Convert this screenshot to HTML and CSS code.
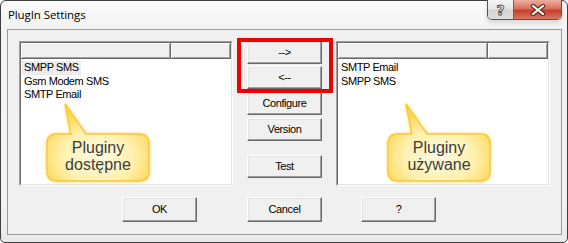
FILE: index.html
```html
<!DOCTYPE html>
<html>
<head>
<meta charset="utf-8">
<link rel="stylesheet" href="styles.css">
</head>
<body>
<div class="window">
  <div class="titlebar">
    <span class="title">PlugIn Settings</span>
    <div class="caption-btns">
      <div class="cap-help">?</div>
      <div class="cap-close">
        <svg width="16" height="12" viewBox="0 0 16 12">
          <path d="M3 2 L13 10 M13 2 L3 10" stroke="#5a2a20" stroke-width="4.2" stroke-linecap="round" fill="none"/>
          <path d="M3 2 L13 10 M13 2 L3 10" stroke="#ffffff" stroke-width="2.2" stroke-linecap="round" fill="none"/>
        </svg>
      </div>
    </div>
  </div>
  <div class="client">
    <div class="main-row">
      <div class="listbox">
        <div class="listbox-inner">
          <div class="lv-header"><div class="col col1"></div><div class="col col2"></div></div>
          <ul class="items">
            <li class="selected">SMPP SMS</li>
            <li>Gsm Modem SMS</li>
            <li>SMTP Email</li>
          </ul>
        </div>
      </div>
      <div class="btn-col">
        <button class="btn">--&gt;</button>
        <button class="btn gap2">&lt;--</button>
        <button class="btn gap3">Configure</button>
        <button class="btn gap3">Version</button>
        <button class="btn gap14">Test</button>
      </div>
      <div class="listbox">
        <div class="listbox-inner">
          <div class="lv-header"><div class="col col1"></div><div class="col col2"></div></div>
          <ul class="items">
            <li>SMTP Email</li>
            <li>SMPP SMS</li>
          </ul>
        </div>
      </div>
    </div>
    <div class="bottom-row">
      <button class="btn btn-tall btn-ok">OK</button>
      <button class="btn btn-tall btn-cancel">Cancel</button>
      <button class="btn btn-tall btn-help">?</button>
    </div>
  </div>

  <div class="red-box"></div>

  <div class="callout callout-left">
    <svg class="callout-shape" width="104" height="80" viewBox="0 0 104 80">
      <defs>
        <radialGradient id="cg1" cx="50%" cy="68%" r="62%">
          <stop offset="0" stop-color="#fffbe4"/>
          <stop offset="0.55" stop-color="#fff1b0"/>
          <stop offset="1" stop-color="#ffd54e"/>
        </radialGradient>
      </defs>
      <path d="M19 1 L40 31 H93 Q103 31 103 41 V68 Q103 78 93 78 H11 Q1 78 1 68 V41 Q1 31 11 31 H25 Z" fill="url(#cg1)" stroke="#f9c93c" stroke-width="1.4"/>
    </svg>
    <div class="callout-text">Pluginy<br>dostępne</div>
  </div>

  <div class="callout callout-right">
    <svg class="callout-shape" width="104" height="80" viewBox="0 0 104 80">
      <defs>
        <radialGradient id="cg2" cx="50%" cy="68%" r="62%">
          <stop offset="0" stop-color="#fffbe4"/>
          <stop offset="0.55" stop-color="#fff1b0"/>
          <stop offset="1" stop-color="#ffd54e"/>
        </radialGradient>
      </defs>
      <path d="M19 1 L40 31 H93 Q103 31 103 41 V68 Q103 78 93 78 H11 Q1 78 1 68 V41 Q1 31 11 31 H25 Z" fill="url(#cg2)" stroke="#f9c93c" stroke-width="1.4"/>
    </svg>
    <div class="callout-text">Pluginy<br>używane</div>
  </div>
</div>
</body>
</html>
```

FILE: styles.css
```css
* { box-sizing: border-box; }

html, body {
  margin: 0;
  padding: 0;
  background: #ffffff;
}

body {
  width: 568px;
  height: 243px;
  overflow: hidden;
  font-family: "Liberation Sans", Arial, sans-serif;
}

.window {
  position: relative;
  width: 568px;
  height: 243px;
  border: 1px solid #3f3f3f;
  border-radius: 6px 6px 5px 5px;
  background: linear-gradient(#fbfbfb, #f2f2f2 30px, #f3f3f3 200px, #e9e9e9);
  padding: 0 5px 7px 6px;
  display: flex;
  flex-direction: column;
}

.titlebar {
  height: 28px;
  display: flex;
  align-items: flex-start;
}

.title {
  font-family: "Open Sans", "Noto Sans", sans-serif;
  font-size: 11.5px;
  color: #000;
  padding-top: 6px;
  padding-left: 1px;
  letter-spacing: -0.1px;
}

.caption-btns {
  margin-left: auto;
  margin-top: -1px;
  display: flex;
  height: 20px;
  border: 1px solid #555;
  border-top: none;
  border-radius: 0 0 5px 5px;
  overflow: hidden;
  box-shadow: 0 3px 5px rgba(0, 0, 0, 0.12);
}

.cap-help {
  width: 26px;
  height: 19px;
  border-right: 1px solid #666;
  background: linear-gradient(#f6f6f6, #e6e6e6 48%, #d2d2d2 52%, #dedede);
  display: flex;
  align-items: center;
  justify-content: center;
  font-family: "DejaVu Sans", sans-serif;
  font-weight: bold;
  font-size: 14px;
  color: #ffffff;
  -webkit-text-stroke: 1px #555;
}

.cap-close {
  width: 47px;
  height: 19px;
  background: linear-gradient(#eab0a2, #d9705c 45%, #c6412b 55%, #d8755e);
  display: flex;
  align-items: center;
  justify-content: center;
}

.client {
  flex: 1;
  border: 1px solid #9a9a9a;
  background: #f0f0f0;
  padding: 11px 11px 0 11px;
  display: flex;
  flex-direction: column;
}

.main-row {
  display: flex;
  height: 145px;
  gap: 14px;
}

.listbox {
  width: 214px;
  height: 145px;
  border: 1px solid;
  border-color: #a0a0a0 #ffffff #ffffff #a0a0a0;
  background: #fff;
}

.listbox-inner {
  height: 100%;
  border: 1px solid;
  border-color: #696969 #e3e3e3 #e3e3e3 #696969;
  background: #fff;
}

.lv-header {
  display: flex;
  height: 16px;
  background: #f0f0f0;
}

.col {
  height: 16px;
  background: #f0f0f0;
  border-right: 1px solid #696969;
  border-bottom: 1px solid #696969;
  box-shadow: inset 1px 1px 0 #ffffff, inset -1px -1px 0 #a0a0a0;
}

.col1 { width: 150px; }
.col2 { flex: 1; }

.items {
  list-style: none;
  margin: 0;
  padding: 2px 0 0 0;
  font-size: 11px;
  letter-spacing: -0.4px;
  line-height: 13.5px;
  color: #000;
}

.items li {
  width: fit-content;
  margin-left: 1px;
  padding: 0 2px 0 2px;
}

.items li.selected {
  background: #ececec;
}

.btn-col {
  width: 75px;
  display: flex;
  flex-direction: column;
}

.btn {
  width: 75px;
  height: 23px;
  margin: 0;
  padding: 0;
  background: #f0f0f0;
  border: 1px solid;
  border-color: #ffffff #696969 #696969 #ffffff;
  box-shadow: inset -1px -1px 0 #a0a0a0, inset 1px 1px 0 #e3e3e3;
  font-family: "Liberation Sans", Arial, sans-serif;
  font-size: 11px;
  letter-spacing: -0.4px;
  color: #000;
  line-height: 1;
}

.gap2 { margin-top: 2px; }
.gap3 { margin-top: 3px; }
.gap14 { margin-top: 14px; }

.bottom-row {
  display: flex;
  margin-top: 11px;
}

.btn-tall { height: 25px; }
.btn-ok { margin-left: 103px; }
.btn-cancel { margin-left: 50px; }
.btn-help { margin-left: 39px; }

.red-box {
  position: absolute;
  left: 236px;
  top: 37px;
  width: 96px;
  height: 55px;
  border: 4px solid #f00000;
}

.callout {
  position: absolute;
  top: 102px;
  width: 104px;
  height: 80px;
}

.callout-left { left: 45px; }
.callout-right { left: 386px; }

.callout-shape {
  display: block;
  filter: drop-shadow(0 0 1.5px rgba(255, 196, 40, 0.8));
}

.callout-text {
  position: absolute;
  left: 1px;
  top: 31px;
  width: 102px;
  height: 47px;
  display: flex;
  align-items: center;
  justify-content: center;
  text-align: center;
  font-family: "Liberation Sans", Arial, sans-serif;
  font-size: 16px;
  line-height: 17px;
  color: #3c3c3c;
  padding-bottom: 4px;
}
```
